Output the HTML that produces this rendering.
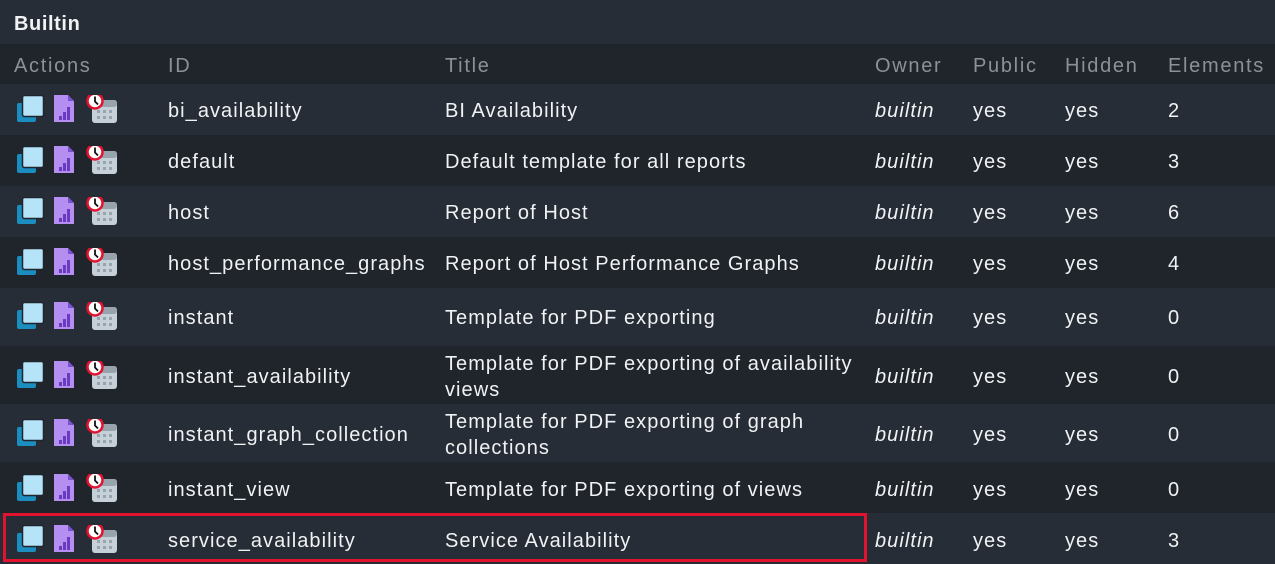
<!DOCTYPE html>
<html><head><meta charset="utf-8"><style>
body{margin:0;width:1275px;height:564px;background:#272d36;font-family:"Liberation Sans",sans-serif;overflow:hidden;position:relative;color:#f0f2f4}
.band{position:absolute;left:0;width:1275px}
.t{position:absolute;font-size:20px;letter-spacing:1.05px;white-space:nowrap;line-height:26px;margin-top:2px}
.h{color:#8c9198;letter-spacing:1.7px}
.i{font-style:italic}
svg.ic{position:absolute;left:14px}
</style></head><body>
<svg width="0" height="0" style="position:absolute"><defs>
<g id="ico">
<rect x="3" y="8" width="19" height="19" rx="2" fill="#1b8dbf"/>
<rect x="8.5" y="0.5" width="21" height="21" rx="2" fill="#b5e4f9" stroke="#20252c" stroke-width="1.5"/>
<path d="M40 0h14l6 6v21h-20z" fill="#b48ef0"/>
<path d="M54 0v6h6z" fill="#7a4fd0"/>
<rect x="45" y="21" width="3" height="4" fill="#6a3bbf"/><rect x="49" y="17" width="3" height="8" fill="#6a3bbf"/><rect x="53" y="12" width="3" height="13" fill="#6a3bbf"/>
<rect x="78" y="5" width="25" height="23" rx="3" fill="#c5d0d8"/>
<rect x="78" y="5" width="25" height="7" rx="3" fill="#97a4ae"/>
<g fill="#97a4ae"><rect x="83" y="15" width="3" height="3"/><rect x="89" y="15" width="3" height="3"/><rect x="95" y="15" width="3" height="3"/><rect x="83" y="21" width="3" height="3"/><rect x="89" y="21" width="3" height="3"/><rect x="95" y="21" width="3" height="3"/></g>
<circle cx="81" cy="6" r="7.5" fill="#fff" stroke="#e3122f" stroke-width="2.5"/>
<path d="M81 1.5v5l3 3" stroke="#111" stroke-width="1.8" fill="none"/>
</g></defs></svg>

<div class="band" style="top:44px;height:40px;background:#20252c"></div>
<div class="band" style="top:135px;height:51px;background:#20252c"></div>
<div class="band" style="top:237px;height:51px;background:#20252c"></div>
<div class="band" style="top:346px;height:58px;background:#20252c"></div>
<div class="band" style="top:462px;height:51px;background:#20252c"></div>

<div class="t" style="left:14px;top:9px;font-weight:bold;font-size:20px;letter-spacing:0.6px">Builtin</div>
<div class="t h" style="left:14px;top:51px">Actions</div>
<div class="t h" style="left:168px;top:51px">ID</div>
<div class="t h" style="left:445px;top:51px">Title</div>
<div class="t h" style="left:875px;top:51px">Owner</div>
<div class="t h" style="left:973px;top:51px">Public</div>
<div class="t h" style="left:1065px;top:51px">Hidden</div>
<div class="t h" style="left:1168px;top:51px">Elements</div>

<svg class="ic" style="top:95px" width="110" height="30"><use href="#ico"/></svg>
<div class="t" style="left:168px;top:96px">bi_availability</div><div class="t" style="left:445px;top:96px">BI Availability</div><div class="t i" style="left:875px;top:96px">builtin</div><div class="t" style="left:973px;top:96px">yes</div><div class="t" style="left:1065px;top:96px">yes</div><div class="t" style="left:1168px;top:96px">2</div>

<svg class="ic" style="top:146px" width="110" height="30"><use href="#ico"/></svg>
<div class="t" style="left:168px;top:147px">default</div><div class="t" style="left:445px;top:147px">Default template for all reports</div><div class="t i" style="left:875px;top:147px">builtin</div><div class="t" style="left:973px;top:147px">yes</div><div class="t" style="left:1065px;top:147px">yes</div><div class="t" style="left:1168px;top:147px">3</div>

<svg class="ic" style="top:197px" width="110" height="30"><use href="#ico"/></svg>
<div class="t" style="left:168px;top:198px">host</div><div class="t" style="left:445px;top:198px">Report of Host</div><div class="t i" style="left:875px;top:198px">builtin</div><div class="t" style="left:973px;top:198px">yes</div><div class="t" style="left:1065px;top:198px">yes</div><div class="t" style="left:1168px;top:198px">6</div>

<svg class="ic" style="top:248px" width="110" height="30"><use href="#ico"/></svg>
<div class="t" style="left:168px;top:249px">host_performance_graphs</div><div class="t" style="left:445px;top:249px">Report of Host Performance Graphs</div><div class="t i" style="left:875px;top:249px">builtin</div><div class="t" style="left:973px;top:249px">yes</div><div class="t" style="left:1065px;top:249px">yes</div><div class="t" style="left:1168px;top:249px">4</div>

<svg class="ic" style="top:302px" width="110" height="30"><use href="#ico"/></svg>
<div class="t" style="left:168px;top:303px">instant</div><div class="t" style="left:445px;top:303px">Template for PDF exporting</div><div class="t i" style="left:875px;top:303px">builtin</div><div class="t" style="left:973px;top:303px">yes</div><div class="t" style="left:1065px;top:303px">yes</div><div class="t" style="left:1168px;top:303px">0</div>

<svg class="ic" style="top:361px" width="110" height="30"><use href="#ico"/></svg>
<div class="t" style="left:168px;top:362px">instant_availability</div><div class="t" style="left:445px;top:349px">Template for PDF exporting of availability<br>views</div><div class="t i" style="left:875px;top:362px">builtin</div><div class="t" style="left:973px;top:362px">yes</div><div class="t" style="left:1065px;top:362px">yes</div><div class="t" style="left:1168px;top:362px">0</div>

<svg class="ic" style="top:419px" width="110" height="30"><use href="#ico"/></svg>
<div class="t" style="left:168px;top:420px">instant_graph_collection</div><div class="t" style="left:445px;top:407px">Template for PDF exporting of graph<br>collections</div><div class="t i" style="left:875px;top:420px">builtin</div><div class="t" style="left:973px;top:420px">yes</div><div class="t" style="left:1065px;top:420px">yes</div><div class="t" style="left:1168px;top:420px">0</div>

<svg class="ic" style="top:474px" width="110" height="30"><use href="#ico"/></svg>
<div class="t" style="left:168px;top:475px">instant_view</div><div class="t" style="left:445px;top:475px">Template for PDF exporting of views</div><div class="t i" style="left:875px;top:475px">builtin</div><div class="t" style="left:973px;top:475px">yes</div><div class="t" style="left:1065px;top:475px">yes</div><div class="t" style="left:1168px;top:475px">0</div>

<svg class="ic" style="top:525px" width="110" height="30"><use href="#ico"/></svg>
<div class="t" style="left:168px;top:526px">service_availability</div><div class="t" style="left:445px;top:526px">Service Availability</div><div class="t i" style="left:875px;top:526px">builtin</div><div class="t" style="left:973px;top:526px">yes</div><div class="t" style="left:1065px;top:526px">yes</div><div class="t" style="left:1168px;top:526px">3</div>

<div style="position:absolute;left:3px;top:513px;width:858px;height:43px;border:3px solid #e3122f"></div>
</body></html>
